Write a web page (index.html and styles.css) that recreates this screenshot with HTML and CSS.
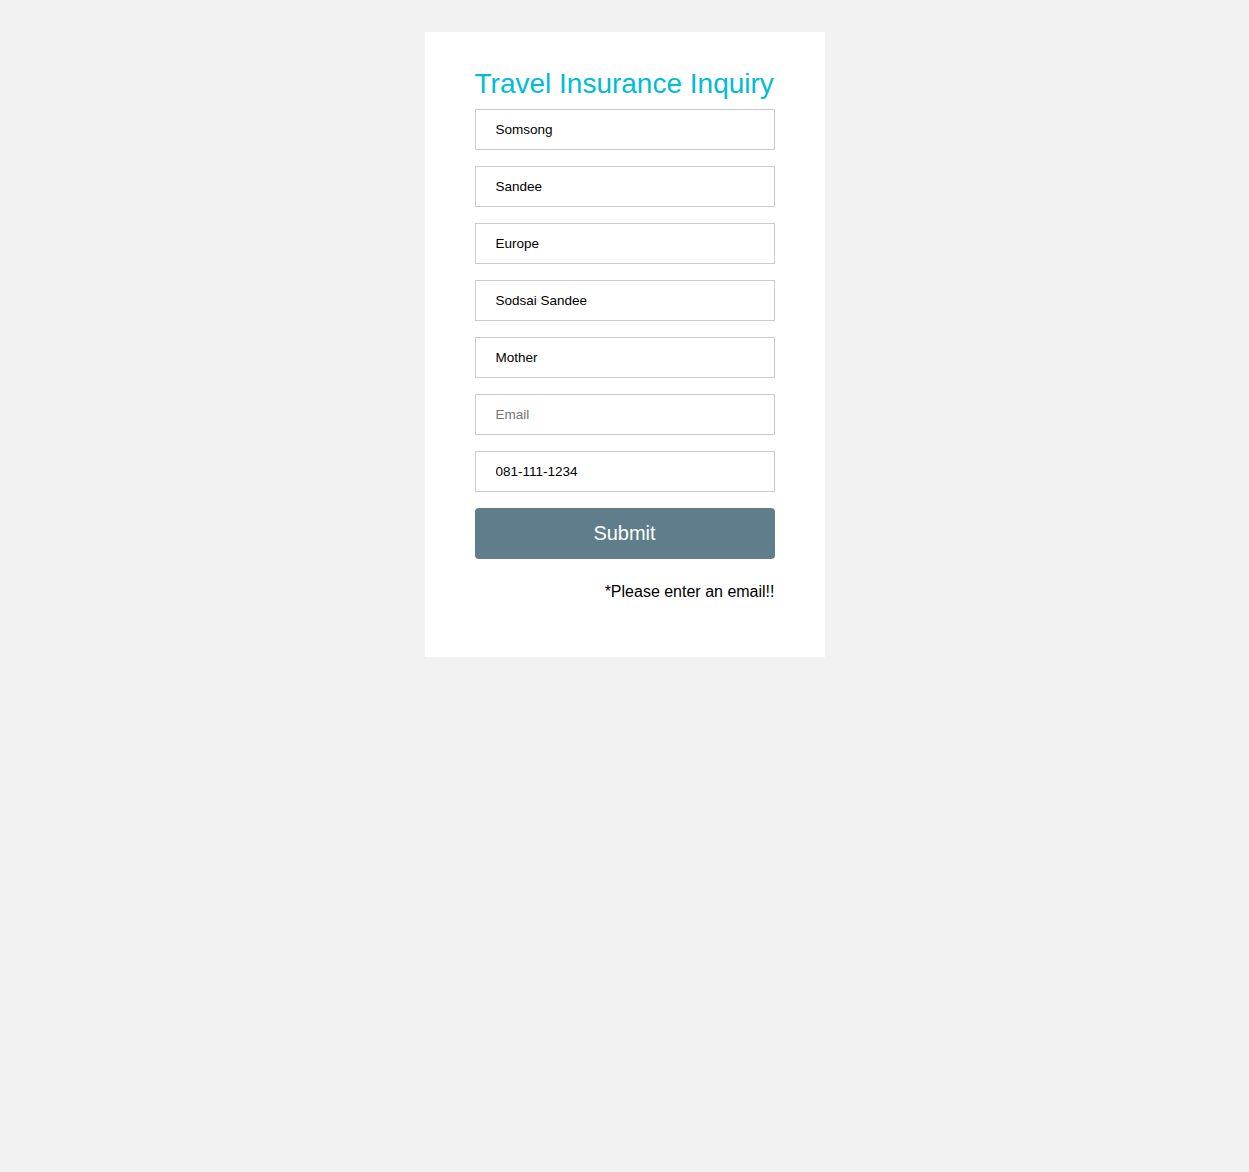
FILE: index.html
```html
<!DOCTYPE html>
<html>
<head>
<meta charset="utf-8">
<link rel="stylesheet" href="styles.css">
</head>
<body>
<div class="card">
  <h2 class="title">Travel Insurance Inquiry</h2>
  <form class="form">
    <input class="field" type="text" value="Somsong">
    <input class="field" type="text" value="Sandee">
    <input class="field" type="text" value="Europe">
    <input class="field" type="text" value="Sodsai Sandee">
    <input class="field" type="text" value="Mother">
    <input class="field" type="text" placeholder="Email">
    <input class="field" type="text" value="081-111-1234">
    <button class="submit" type="button">Submit</button>
  </form>
  <p class="msg">*Please enter an email!!</p>
</div>
</body>
</html>
```
FILE: styles.css
```css
html, body {
  margin: 0;
  padding: 0;
  background: #f2f2f2;
  font-family: "Liberation Sans", Arial, sans-serif;
}
.card {
  width: 300px;
  margin: 32px auto 0;
  background: #fff;
  padding: 36px 50px 56px;
}
.title {
  margin: 0 0 9px;
  font-weight: normal;
  font-size: 28px;
  line-height: 32px;
  color: #00bcd4;
  white-space: nowrap;
}
.form {
  display: flex;
  flex-direction: column;
  gap: 16px;
  margin: 0;
}
.field {
  box-sizing: border-box;
  width: 300px;
  height: 41px;
  margin: 0;
  padding: 0 20px;
  border: 1px solid #ccc;
  background: #fff;
  font-family: "Liberation Sans", Arial, sans-serif;
  font-size: 13.5px;
  color: #000;
  outline: none;
}
.field::placeholder {
  color: #757575;
}
.submit {
  height: 51px;
  width: 300px;
  border: none;
  border-radius: 4px;
  background: #607d8b;
  color: #fff;
  font-family: "Liberation Sans", Arial, sans-serif;
  font-size: 20px;
}
.msg {
  margin: 24px 0 0;
  text-align: right;
  font-size: 16px;
  line-height: 18px;
  color: #000;
}
```
